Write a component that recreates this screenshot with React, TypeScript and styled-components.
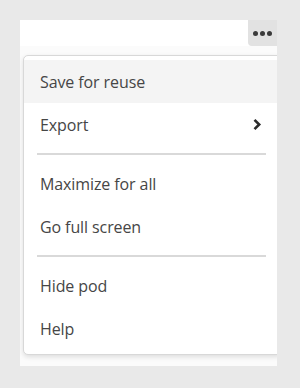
import React from "react";
import styled, {createGlobalStyle} from "styled-components";

const GlobalStyle = createGlobalStyle`
  html, body {
    margin: 0;
    padding: 0;
    background: #e9e9e9;
  }
`;

const Page = styled.div`
  width: 300px;
  height: 388px;
  padding: 20px 0 0 20px;
  box-sizing: border-box;
  font-family: "Open Sans", "Liberation Sans", sans-serif;
`;

const Pod = styled.div`
  width: 257px;
  height: 346px;
  background: #fbfbfb;
  overflow: hidden;
  display: flex;
  flex-direction: column;
`;

const PodHeader = styled.div`
  display: flex;
  justify-content: flex-end;
  height: 26px;
  background: #ffffff;
`;

const MoreButton = styled.button`
  width: 29px;
  height: 26px;
  border: none;
  padding: 0;
  background: #e2e2e2;
  border-bottom-left-radius: 4px;
  display: flex;
  align-items: center;
  justify-content: center;
  gap: 2px;
`;

const Dot = styled.span`
  width: 5px;
  height: 5px;
  border-radius: 50%;
  background: #3a3a3a;
`;

const Menu = styled.div`
  margin: 9px -5px 0 3px;
  padding: 4px 0;
  background: #ffffff;
  border: 1px solid #d8d8d8;
  border-radius: 5px;
  box-shadow: 0 2px 5px rgba(0, 0, 0, 0.12);
`;

const Item = styled.div<{ $active?: boolean }>`
  height: 43px;
  display: flex;
  align-items: center;
  justify-content: space-between;
  padding: 0 19px 0 16px;
  font-size: 16px;
  letter-spacing: -0.1px;
  color: #464646;
  background: ${p => (p.$active ? "#f4f4f4" : "transparent")};
`;

const Divider = styled.div`
  height: 2px;
  margin: 7px 15px 7px 13px;
  background: #d9d9d9;
`;

const Chevron = () => (
    <svg width="10" height="13" viewBox="0 0 10 13">
        <path d="M2.5 1.8 L7.2 6.5 L2.5 11.2" fill="none" stroke="#2c2c2c" strokeWidth="2.6"/>
    </svg>
);

export default function App() {
    return (
        <Page>
            <GlobalStyle/>
            <Pod>
                <PodHeader>
                    <MoreButton>
                        <Dot/><Dot/><Dot/>
                    </MoreButton>
                </PodHeader>
                <Menu>
                    <Item $active>Save for reuse</Item>
                    <Item>Export<Chevron/></Item>
                    <Divider/>
                    <Item>Maximize for all</Item>
                    <Item>Go full screen</Item>
                    <Divider/>
                    <Item>Hide pod</Item>
                    <Item>Help</Item>
                </Menu>
            </Pod>
        </Page>
    );
}
